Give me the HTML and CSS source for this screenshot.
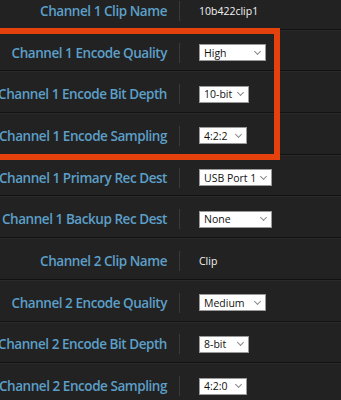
FILE: index.html
```html
<!DOCTYPE html>
<html lang="en">

<head>
    <meta charset="utf-8">
    <meta name="viewport" content="width=device-width, initial-scale=1.0">
    <title>Encoder settings</title>
    <link rel="stylesheet" href="styles.css">
</head>

<body>
    <section class="indstillinger">
        <div class="raekke">
            <span class="navn">Channel 1 Clip Name</span>
            <span class="skille"></span>
            <span class="tekst">10b422clip1</span>
        </div>
        <div class="raekke">
            <span class="navn">Channel 1 Encode Quality</span>
            <span class="skille"></span>
            <span class="vaelg bred">High</span>
        </div>
        <div class="raekke">
            <span class="navn">Channel 1 Encode Bit Depth</span>
            <span class="skille"></span>
            <span class="vaelg smal">10-bit</span>
        </div>
        <div class="raekke">
            <span class="navn">Channel 1 Encode Sampling</span>
            <span class="skille"></span>
            <span class="vaelg mindst">4:2:2</span>
        </div>
        <div class="raekke">
            <span class="navn">Channel 1 Primary Rec Dest</span>
            <span class="skille"></span>
            <span class="vaelg bredest">USB Port 1</span>
        </div>
        <div class="raekke">
            <span class="navn">Channel 1 Backup Rec Dest</span>
            <span class="skille"></span>
            <span class="vaelg bredest">None</span>
        </div>
        <div class="raekke">
            <span class="navn">Channel 2 Clip Name</span>
            <span class="skille"></span>
            <span class="tekst">Clip</span>
        </div>
        <div class="raekke">
            <span class="navn">Channel 2 Encode Quality</span>
            <span class="skille"></span>
            <span class="vaelg bred">Medium</span>
        </div>
        <div class="raekke">
            <span class="navn">Channel 2 Encode Bit Depth</span>
            <span class="skille"></span>
            <span class="vaelg smal">8-bit</span>
        </div>
        <div class="raekke">
            <span class="navn">Channel 2 Encode Sampling</span>
            <span class="skille"></span>
            <span class="vaelg mindst">4:2:0</span>
        </div>

        <!-- markering rundt om encode felterne -->
        <div class="markering"></div>
    </section>
</body>

</html>
```

FILE: styles.css
```css
* {
    margin: 0;
    padding: 0;
    box-sizing: border-box;
}

html,
body {
    height: 100%;
    overflow: hidden;
}

body {
    background-color: #222222;
    font-family: "Open Sans", "Noto Sans", sans-serif;
}

.indstillinger {
    position: relative;
    margin-top: -12px;
}

.raekke {
    display: grid;
    grid-template-columns: 167px 32px 1fr;
    align-items: center;
    height: 41.7px;
    padding-top: 5px;
    border-bottom: 1px solid #121212;
    box-shadow: 0 1px 0 #2a2a2a;
}

.navn {
    justify-self: end;
    white-space: nowrap;
    color: #5c9fc8;
    font-size: 13.5px;
    font-weight: 600;
    letter-spacing: -0.45px;
}

.skille {
    justify-self: start;
    margin-left: 12px;
    width: 1px;
    height: 20px;
    background-color: #3a3a3a;
}

.tekst {
    color: #f2f2f2;
    font-size: 10.5px;
    white-space: nowrap;
}

.vaelg {
    display: flex;
    align-items: center;
    justify-content: space-between;
    height: 17px;
    padding: 0 5px 0 4px;
    background-color: #ffffff;
    border: 1px solid #9a9a9a;
    color: #111111;
    font-size: 10.5px;
    white-space: nowrap;
}

.vaelg::after {
    content: "";
    flex-shrink: 0;
    width: 4px;
    height: 4px;
    margin-top: -3px;
    margin-left: 4px;
    border-right: 1px solid #8a8a8a;
    border-bottom: 1px solid #8a8a8a;
    transform: rotate(45deg);
}

.bred {
    width: 67px;
}

.smal {
    width: 50px;
}

.mindst {
    width: 48px;
}

.bredest {
    width: 73px;
}

.markering {
    position: absolute;
    left: -10px;
    top: 40px;
    width: 290px;
    height: 132px;
    border: 6px solid #e5410d;
}
```
